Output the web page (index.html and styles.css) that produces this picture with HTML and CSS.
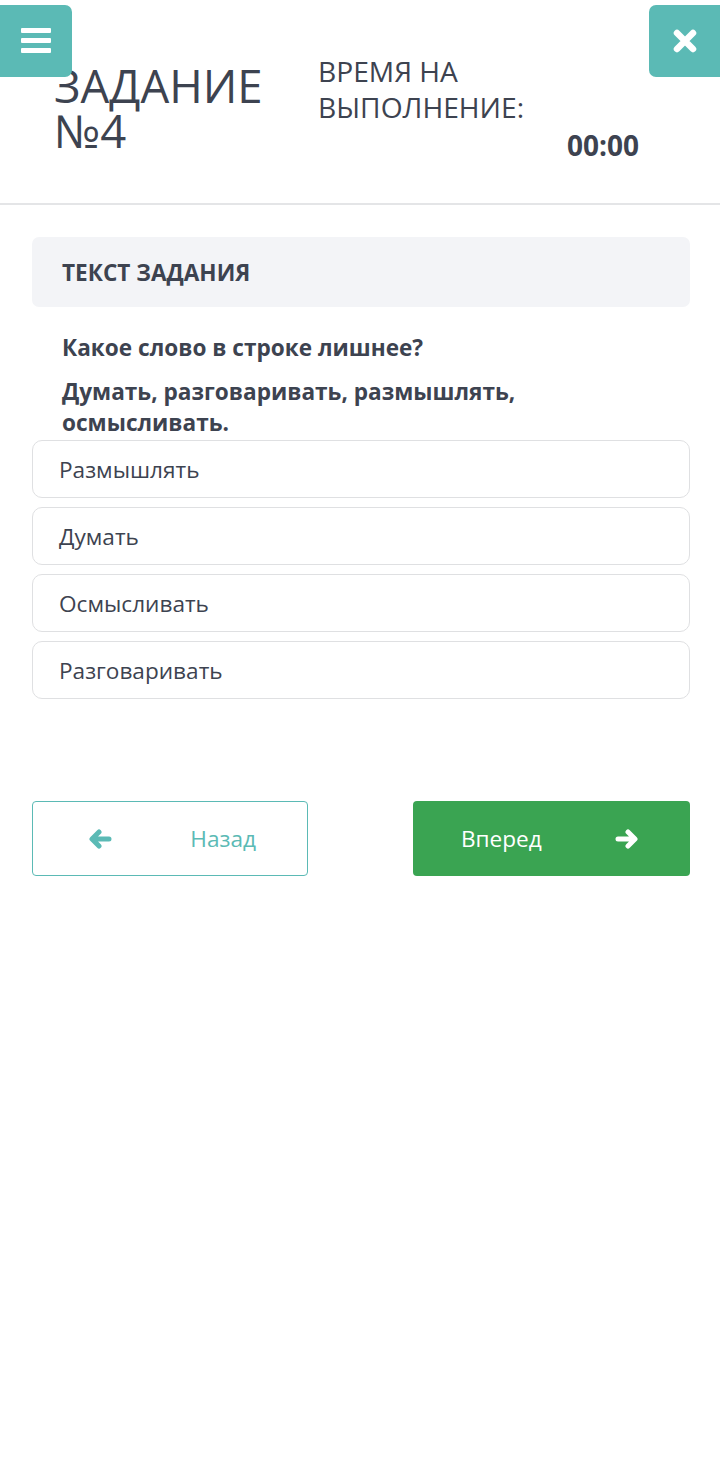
FILE: index.html
```html
<!DOCTYPE html>
<html lang="ru">
<head>
<meta charset="utf-8">
<title>Задание №4</title>
<link rel="stylesheet" href="styles.css">
</head>
<body>
<button class="float-btn menu-btn" aria-label="Меню">
  <svg width="30" height="26" viewBox="0 0 30 26"><rect x="0" y="0" width="30" height="5" rx="1" fill="#fff"/><rect x="0" y="10" width="30" height="5" rx="1" fill="#fff"/><rect x="0" y="20" width="30" height="5" rx="1" fill="#fff"/></svg>
</button>
<button class="float-btn close-btn" aria-label="Закрыть">
  <svg width="24" height="24" viewBox="0 0 24 24"><path d="M4 4 L20 20 M20 4 L4 20" stroke="#fff" stroke-width="6.5" stroke-linecap="round"/></svg>
</button>

<header class="header">
  <h1 class="title">ЗАДАНИЕ №4</h1>
  <div class="timer">
    <div class="timer-label">ВРЕМЯ НА ВЫПОЛНЕНИЕ:</div>
    <div class="timer-value">00:00</div>
  </div>
</header>

<main class="content">
  <div class="panel">ТЕКСТ ЗАДАНИЯ</div>
  <div class="question">
    <p>Какое слово в строке лишнее?</p>
    <p>Думать, разговаривать, размышлять, осмысливать.</p>
  </div>
  <div class="options">
    <div class="option">Размышлять</div>
    <div class="option">Думать</div>
    <div class="option">Осмысливать</div>
    <div class="option">Разговаривать</div>
  </div>
  <div class="nav">
    <button class="nav-btn back">
      <svg width="24" height="20" viewBox="0 0 24 20"><path d="M21 10 H5 M11 3 L4 10 L11 17" fill="none" stroke="#5bbab5" stroke-width="5" stroke-linecap="round" stroke-linejoin="round"/></svg>
      <span>Назад</span>
    </button>
    <button class="nav-btn next">
      <span>Вперед</span>
      <svg width="24" height="20" viewBox="0 0 24 20"><path d="M3 10 H19 M13 3 L20 10 L13 17" fill="none" stroke="#fff" stroke-width="5" stroke-linecap="round" stroke-linejoin="round"/></svg>
    </button>
  </div>
</main>
</body>
</html>
```

FILE: styles.css
```css
html, body {
  margin: 0;
  padding: 0;
  background: #fff;
  overflow-x: hidden;
}
body {
  font-family: "Open Sans", "Noto Sans", sans-serif;
  color: #3d4350;
}
.float-btn {
  position: absolute;
  top: 5px;
  height: 72px;
  border: none;
  background: #5bbab5;
  display: flex;
  align-items: center;
  justify-content: center;
  padding: 0;
  cursor: pointer;
}
.menu-btn {
  left: 0;
  width: 72px;
  border-radius: 0 7px 7px 0;
}
.close-btn {
  right: 0;
  width: 71px;
  border-radius: 7px 0 0 7px;
}
.header {
  display: flex;
  align-items: flex-start;
  height: 150px;
  padding-top: 53px;
  border-bottom: 2px solid #e4e5e7;
}
.title {
  margin: 10px 0 0 54px;
  width: 230px;
  font-size: 45.5px;
  line-height: 45px;
  font-weight: 400;
  color: #3d4350;
}
.timer {
  margin-left: 34px;
  width: 321px;
}
.timer-label {
  font-size: 28.2px;
  line-height: 36px;
  font-weight: 400;
}
.timer-value {
  margin-top: 2px;
  text-align: right;
  font-size: 28px;
  line-height: 37px;
  font-weight: 700;
}
.content {
  padding: 32px 30px 0 32px;
}
.panel {
  background: #f3f4f7;
  border-radius: 7px;
  height: 70px;
  display: flex;
  align-items: center;
  padding-left: 30px;
  font-size: 22.6px;
  font-weight: 700;
}
.question {
  padding: 25px 30px 0 30px;
  font-size: 22.6px;
  font-weight: 700;
  line-height: 31px;
}
.question p {
  margin: 0 0 13px;
}
.question p:last-child {
  margin-bottom: 0;
}
.options {
  display: flex;
  flex-direction: column;
  gap: 9px;
  margin-top: 2px;
}
.option {
  height: 56px;
  border: 1px solid #dfe0e2;
  border-radius: 10px;
  display: flex;
  align-items: center;
  padding-left: 26px;
  font-size: 22.6px;
  font-weight: 400;
}
.nav {
  display: flex;
  justify-content: space-between;
  margin-top: 102px;
}
.nav-btn {
  width: 276px;
  height: 75px;
  border-radius: 4px;
  display: flex;
  align-items: center;
  justify-content: space-between;
  font-family: "Open Sans", "Noto Sans", sans-serif;
  font-size: 22.6px;
  font-weight: 400;
  cursor: pointer;
  box-sizing: border-box;
}
.back {
  background: #fff;
  border: 1px solid #5bbab5;
  color: #5bbab5;
  padding: 0 51px 0 55px;
}
.next {
  width: 277px;
  background: #3aa452;
  border: none;
  color: #fff;
  padding: 0 51px 0 48px;
}
```
